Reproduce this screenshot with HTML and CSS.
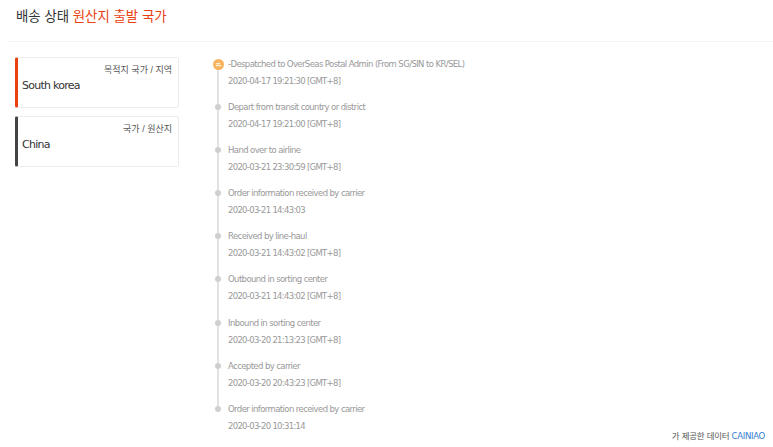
FILE: index.html
```html
<!DOCTYPE html>
<html lang="ko">
<head>
<meta charset="utf-8">
<link rel="stylesheet" href="styles.css">
</head>
<body>
<div class="header"><span class="title">배송 상태 <span class="accent">원산지 출발 국가</span></span></div>
<div class="divider"></div>
<div class="main">
  <div class="cards">
    <div class="card card-dest">
      <div class="card-label">목적지 국가 / 지역</div>
      <div class="card-value">South korea</div>
    </div>
    <div class="card card-origin">
      <div class="card-label">국가 / 원산지</div>
      <div class="card-value">China</div>
    </div>
  </div>
  <div class="timeline">
    <div class="item first">
      <span class="icon"><svg viewBox="0 0 12 12" width="11" height="11"><circle cx="6" cy="6" r="6" fill="#f7b35b"/><path d="M3 5.2h4.6l-1.2-1.1M3 7.3h6" stroke="#fff" stroke-width="1" fill="none"/></svg></span>
      <div class="evt">-Despatched to OverSeas Postal Admin (From SG/SIN to KR/SEL)</div>
      <div class="time">2020-04-17 19:21:30 [GMT+8]</div>
    </div>
    <div class="item"><span class="dot"></span>
      <div class="evt">Depart from transit country or district</div>
      <div class="time">2020-04-17 19:21:00 [GMT+8]</div>
    </div>
    <div class="item"><span class="dot"></span>
      <div class="evt">Hand over to airline</div>
      <div class="time">2020-03-21 23:30:59 [GMT+8]</div>
    </div>
    <div class="item"><span class="dot"></span>
      <div class="evt">Order information received by carrier</div>
      <div class="time">2020-03-21 14:43:03</div>
    </div>
    <div class="item"><span class="dot"></span>
      <div class="evt">Received by line-haul</div>
      <div class="time">2020-03-21 14:43:02 [GMT+8]</div>
    </div>
    <div class="item"><span class="dot"></span>
      <div class="evt">Outbound in sorting center</div>
      <div class="time">2020-03-21 14:43:02 [GMT+8]</div>
    </div>
    <div class="item"><span class="dot"></span>
      <div class="evt">Inbound in sorting center</div>
      <div class="time">2020-03-20 21:13:23 [GMT+8]</div>
    </div>
    <div class="item"><span class="dot"></span>
      <div class="evt">Accepted by carrier</div>
      <div class="time">2020-03-20 20:43:23 [GMT+8]</div>
    </div>
    <div class="item last"><span class="dot"></span>
      <div class="evt">Order information received by carrier</div>
      <div class="time">2020-03-20 10:31:14</div>
    </div>
  </div>
</div>
<div class="footer">가 제공한 데이터 <span class="brand">CAINIAO</span></div>
</body>
</html>
```

FILE: styles.css
```css
html, body {
  margin: 0;
  padding: 0;
  background: #fff;
}
body {
  font-family: "DejaVu Sans", "Noto Sans CJK KR", sans-serif;
  color: #333;
  width: 773px;
  height: 447px;
  overflow: hidden;
  position: relative;
}
.header {
  height: 32px;
  padding: 0 16px;
  display: flex;
  align-items: center;
}
.title {
  font-family: "Noto Sans CJK KR", sans-serif;
  font-size: 13.4px;
  color: #333;
  position: relative;
  top: -1px;
}
.accent { color: #e8400f; }
.divider {
  margin: 9px 0 0 8px;
  border-top: 1px solid #f3f3f3;
}
.main {
  display: flex;
  padding: 15px 0 0 15px;
}
.cards {
  width: 164px;
  display: flex;
  flex-direction: column;
  gap: 8px;
}
.card {
  height: 49px;
  border: 1px solid #ececec;
  border-left: 3px solid #e8400f;
  border-radius: 2px;
  display: flex;
  flex-direction: column;
}
.card-origin { border-left-color: #444; }
.card-label {
  font-family: "Liberation Sans", "Noto Sans CJK KR", sans-serif;
  font-size: 9px;
  color: #555;
  text-align: right;
  padding: 6px 6px 0 0;
  height: 12px;
  line-height: 12px;
}
.card-value {
  font-family: "DejaVu Sans", sans-serif;
  font-size: 11px;
  letter-spacing: -0.75px;
  color: #333;
  padding: 3px 0 0 4px;
  line-height: 14px;
}
.timeline {
  margin-left: 34px;
  padding-top: 1px;
}
.item {
  position: relative;
  padding-left: 15px;
  height: 43.1px;
}
.item::before {
  content: "";
  position: absolute;
  left: 4px;
  top: 6px;
  width: 2px;
  height: 43px;
  background: #e2e2e2;
}
.item.last::before { display: none; }
.dot {
  position: absolute;
  left: 2px;
  top: 3px;
  width: 6px;
  height: 6px;
  border-radius: 50%;
  background: #cfcfcf;
}
.icon {
  position: absolute;
  left: -0.5px;
  top: 0.5px;
  width: 11px;
  height: 11px;
  display: block;
  line-height: 0;
}
.evt, .time {
  font-family: "DejaVu Sans", sans-serif;
  font-size: 8.5px;
  letter-spacing: -0.6px;
  color: #999;
  line-height: 12px;
  white-space: nowrap;
}
.time { margin-top: 5px; letter-spacing: -0.7px; }
.footer {
  position: absolute;
  right: 8px;
  bottom: 6px;
  font-family: "DejaVu Sans", "Noto Sans CJK KR", sans-serif;
  font-size: 8.5px;
  color: #555;
  letter-spacing: -0.3px;
}
.brand { color: #2f80d1; }
```
